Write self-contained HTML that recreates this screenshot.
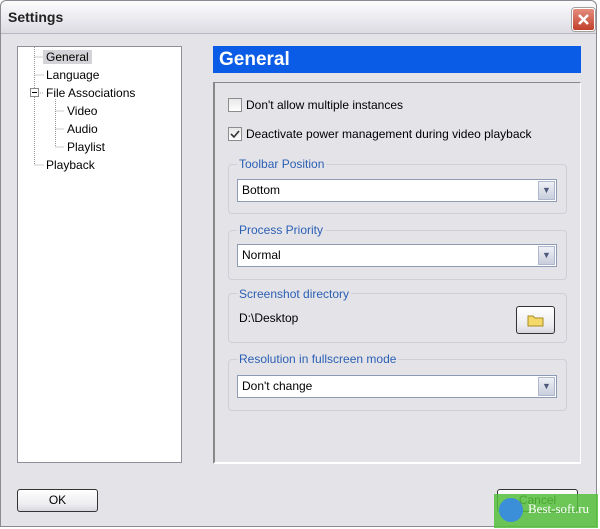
<html><head><style>
body{margin:0;width:600px;height:529px;background:#fff;font-family:"Liberation Sans",sans-serif;font-size:12px;color:#000;overflow:hidden;position:relative}
.win{position:absolute;left:0;top:0;width:597px;height:527px;background:#e4e3e8;border:1px solid #8a8a90;border-radius:6px 6px 0 0;box-sizing:border-box}
.title{position:absolute;left:0;top:0;width:595px;height:32px;background:linear-gradient(#fdfdfd,#e8e8ee 60%,#dcdce2);border-bottom:1px solid #b8b8c0;border-radius:6px 6px 0 0}
.title span{position:absolute;left:7px;top:8px;font-weight:bold;font-size:14px;color:#222}
.close{position:absolute;left:571px;top:7px;width:21px;height:21px;border-radius:3px;background:linear-gradient(#e58c7c,#c2402c);border:1px solid #fff;box-shadow:0 0 0 1px #a0a0a0}
.tree{position:absolute;left:16px;top:45px;width:165px;height:417px;background:#fff;border:1px solid #8f8f9a;box-sizing:border-box}
.t{position:absolute;font-size:12px}
.hdr{position:absolute;left:212px;top:45px;width:368px;height:27px;background:#0a5ce6;color:#fff;font-weight:bold;font-size:19px;line-height:27px;padding-left:6px;box-sizing:border-box}
.panel{position:absolute;left:212px;top:81px;width:368px;height:382px;border-top:1px solid #888;border-left:2px solid #888;border-right:1px solid #fff;border-bottom:2px solid #fff;box-sizing:border-box}
.cb{position:absolute;width:12px;height:12px;border:1px solid #8c8c8c;background:linear-gradient(#e8e8e8,#fff)}
.gb{position:absolute;left:227px;width:339px;border:1px solid #cfcfd6;border-radius:4px;box-sizing:border-box}
.gl{position:absolute;left:236px;color:#2b5fb4;background:#e4e3e8;padding:0 2px}
.sel{position:absolute;left:236px;width:320px;height:23px;background:#fff;border:1px solid #8d9cb4;box-sizing:border-box;line-height:21px;padding-left:4px}
.arr{position:absolute;right:1px;top:1px;width:17px;height:19px;background:linear-gradient(#eef0f6,#c8cedd);border:1px solid #b0b8cc;box-sizing:border-box;color:#4b5a7a;font-size:9px;text-align:center;line-height:17px}
.btn{position:absolute;width:81px;height:23px;border:1px solid #333;border-radius:3px;background:linear-gradient(#fff,#ececf0 70%,#d6d6de);box-sizing:border-box;text-align:center;line-height:21px}
</style></head><body>
<div class="win">
<div class="title"><span>Settings</span></div>
<div class="close"><svg width="21" height="21"><path d="M6 6L15 15M15 6L6 15" stroke="#fff" stroke-width="2.5"/></svg></div>
<div class="tree">
<svg width="60" height="130" style="position:absolute;left:0;top:0"><g stroke="#999" stroke-dasharray="1 1" fill="none"><path d="M16.5 0V118M16.5 10H26M16.5 28H26M20 46H26M16.5 118H26M37.5 52V100M37.5 64H46M37.5 82H46M37.5 100H46"/></g><rect x="12.5" y="41.5" width="8" height="8" fill="#fff" stroke="#888"/><path d="M14 45.5H19" stroke="#000"/></svg>
<div class="t" style="left:25px;top:3px;background:#d4d4d8;padding:0 3px">General</div>
<div class="t" style="left:28px;top:21px">Language</div>
<div class="t" style="left:28px;top:39px">File Associations</div>
<div class="t" style="left:49px;top:57px">Video</div>
<div class="t" style="left:49px;top:75px">Audio</div>
<div class="t" style="left:49px;top:93px">Playlist</div>
<div class="t" style="left:28px;top:111px">Playback</div>
</div>
<div class="hdr">General</div>
<div class="panel"></div>
<div class="cb" style="left:227px;top:97px"></div>
<div class="t" style="left:245px;top:97px">Don't allow multiple instances</div>
<div class="cb" style="left:227px;top:126px"><svg width="12" height="12"><path d="M2 6L5 9L10 3" stroke="#333" stroke-width="1.6" fill="none"/></svg></div>
<div class="t" style="left:245px;top:126px">Deactivate power management during video playback</div>

<div class="gb" style="top:163px;height:50px"></div><div class="gl t" style="top:156px">Toolbar Position</div>
<div class="sel" style="top:178px">Bottom<div class="arr">&#9660;</div></div>
<div class="gb" style="top:229px;height:50px"></div><div class="gl t" style="top:222px">Process Priority</div>
<div class="sel" style="top:243px">Normal<div class="arr">&#9660;</div></div>
<div class="gb" style="top:292px;height:50px"></div><div class="gl t" style="top:286px">Screenshot directory</div>
<div class="t" style="left:238px;top:310px">D:\Desktop</div>
<div class="btn" style="left:515px;top:305px;width:39px;height:28px"><svg width="20" height="16" style="margin-top:5px"><path d="M2 4h5l2 2h8v8H2z" fill="#f3d86a" stroke="#a88a20"/></svg></div>
<div class="gb" style="top:358px;height:52px"></div><div class="gl t" style="top:351px">Resolution in fullscreen mode</div>
<div class="sel" style="top:374px">Don't change<div class="arr">&#9660;</div></div>

<div class="btn" style="left:16px;top:488px">OK</div>
<div class="btn" style="left:496px;top:488px">Cancel</div>
<div style="position:absolute;left:493px;top:493px;width:104px;height:34px;background:#56c03c;opacity:.85"></div>
<div style="position:absolute;left:498px;top:497px;width:24px;height:24px;border-radius:50%;background:#3b8ed8"></div>
<div class="t" style="left:527px;top:500px;color:#fff;font-family:'Liberation Serif',serif;font-size:13px">Best-soft.ru</div>
</div>
</body></html>
